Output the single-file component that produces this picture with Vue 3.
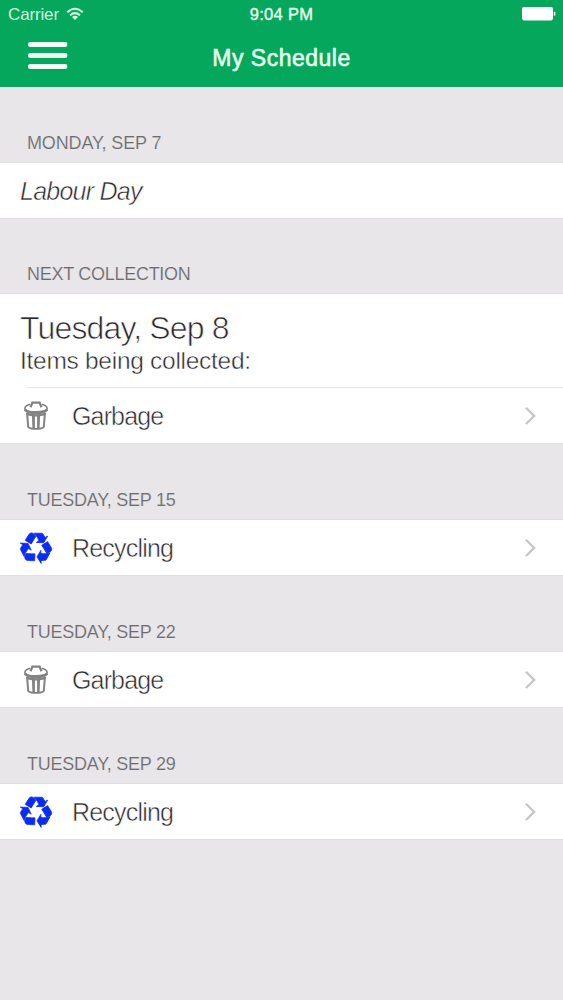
<script setup>
const groups = [
  { title: 'MONDAY, SEP 7', holiday: 'Labour Day' },
  { title: 'NEXT COLLECTION', day: 'Tuesday, Sep 8', kind: 'garbage', label: 'Garbage' },
  { title: 'TUESDAY, SEP 15', kind: 'recycling', label: 'Recycling' },
  { title: 'TUESDAY, SEP 22', kind: 'garbage', label: 'Garbage' },
  { title: 'TUESDAY, SEP 29', kind: 'recycling', label: 'Recycling' },
]
</script>

<template>
  <div class="screen">
    <header>
      <div class="status">
        <div class="carrier">
          <span>Carrier</span>
          <svg width="18" height="14" viewBox="0 0 18 14" fill="none" stroke="#d9ffe6" stroke-width="2">
            <path d="M1.2 5.2Q9-1.8 16.800 5.200M4 8.300Q9 3.900 14 8.300" />
            <path d="M9 13L6 10Q9 7.600 12 10Z" fill="#d9ffe6" stroke="none" />
          </svg>
        </div>
        <span class="time">9:04 PM</span>
        <svg class="battery" width="34" height="14" viewBox="0 0 34 14" fill="#fff">
          <rect x="0" y="0" width="31" height="13.4" rx="1.8" />
          <path d="M31.800 4.800h.6q1 0 1 1v2q0 1-1 1h-.6z" />
        </svg>
      </div>
      <div class="nav">
        <svg width="40" height="28" viewBox="0 0 40 28" fill="#effff4">
          <rect x="0" y="0" width="39.4" height="5" rx="2.3" />
          <rect x="0" y="11" width="39.4" height="5" rx="2.3" />
          <rect x="0" y="22" width="39.4" height="5" rx="2.3" />
        </svg>
        <h1>My Schedule</h1>
      </div>
    </header>

    <section v-for="g in groups" :key="g.title">
      <h2 :class="{ next: g.day, monday: g.holiday }">{{ g.title }}</h2>
      <div class="card">
        <div v-if="g.holiday" class="holiday">{{ g.holiday }}</div>
        <div v-if="g.day" class="summary">
          <div class="day">{{ g.day }}</div>
          <div class="items">Items being collected:</div>
        </div>
        <div v-if="g.label" class="row">
          <svg v-if="g.kind === 'garbage'" class="icon" viewBox="0 0 32 32" fill="none" stroke="#828282">
            <path d="M10 4.200Q4.900 5.500 4.900 8.700C4.900 13 27.100 13 27.100 8.700Q27.100 5.500 22 4.200" stroke-width="1.700" />
            <path d="M4.800 9.500Q7.500 13 16 13T27.200 9.500" stroke-width="2.800" />
            <path d="M10.500 7.200L12.400 2.600H19.600L21.500 7.200" stroke-width="2.300" />
            <path d="M6 12.500Q16 16 26 12.500L24.700 27.500Q22.500 29.800 16 29.800T7.300 27.500Z" fill="#828282" stroke="none" />
            <path d="M8.300 15.500L12 16.200L12.400 27.800L9.200 27.100ZM14.900 16.500H17.100V28H14.900ZM20 16.200L23.700 15.500L22.800 27.100L19.600 27.800Z" fill="#fff" stroke="none" />
          </svg>
          <svg v-else class="icon recycle" viewBox="0 0 1792 1792" fill="#0a2cf0" stroke="#0a2cf0" stroke-width="45">
            <path d="M836 1169l-15 368-2 22-420-29q-36-3-67-31.500t-47-65.500q-11-27-14.500-55t4-65 12-55 21.500-64 19-53q78 12 509 28zm-387-586l180 379-147-92q-63 72-111.500 144.500t-72.500 125-39.500 94.500-18.500 63l-4 21-190-357q-17-26-18-56t6-47l8-18q35-63 114-188l-140-86zm1231 517l-188 359q-12 29-36.500 46.500t-43.500 20.500l-18 4q-71 7-219 12l8 164-230-367 211-362 7 173q170 16 283 5t170-33zm-785-924q-47 63-265 435l-317-187-19-12 225-356q20-31 60-45t80-10q24 2 48.500 12t42 21 41.500 33 36 34.500 36 39.500 32 35zm655 307l212 363q18 37 12.500 76t-27.500 74q-13 20-33 37t-38 28-48.500 22-47 16-51.500 14-46 12q-34-72-265-436l313-195zm-143-226l142-83-220 373-419-20 151-86q-34-89-75-166t-75.500-123.500-64.500-80-47-46.500l-17-13 405 1q31-3 58 10.500t39 28.500l11 15q39 61 112 190z" />
          </svg>
          <span class="label" :class="g.kind">{{ g.label }}</span>
          <svg class="chevron" width="12" height="20" viewBox="0 0 12 20" fill="none" stroke="#c5c5c7" stroke-width="2.2">
            <path d="M2 1.800L10.200 9.900L2 18" />
          </svg>
        </div>
      </div>
    </section>
  </div>
</template>

<style>
body { margin: 0; background: #e8e6e9; }
</style>

<style scoped>
.screen {
  width: 563px;
  height: 1000px;
  overflow: hidden;
  background: #e8e6e9;
  font-family: "Liberation Sans", Arial, sans-serif;
  color: #2c2a2d;
}
header {
  height: 87px;
  box-sizing: border-box;
  background: #04a75b;
  color: #e6ffef;
  box-shadow: 0 1px #f0f3f2;
}
.status {
  height: 28px;
  display: grid;
  grid-template-columns: 1fr auto 1fr;
  align-items: center;
  padding: 0 8px;
  font-size: 17px;
}
.carrier { display: flex; align-items: center; gap: 7px; letter-spacing: -0.15px; color: #d2f9df; padding-top: 1px; }
.carrier svg { margin-top: -2px; }
.time { font-size: 16.5px; letter-spacing: 0.3px; -webkit-text-stroke: 0.4px #e6ffef; padding-top: 1px; }
.battery { justify-self: end; margin-right: -1px; }
.nav {
  display: grid;
  grid-template-columns: 1fr auto 1fr;
  align-items: center;
  height: 59px;
  padding: 0 28px;
}
.nav svg { margin-top: -4px; }
h1 { margin: 0; font-size: 23px; line-height: 28px; font-weight: normal; letter-spacing: 0.5px; -webkit-text-stroke: 0.6px #e6ffef; }
h2 {
  box-sizing: border-box;
  height: 77px;
  margin: 0;
  padding: 46px 27px 0;
  font-size: 18px;
  line-height: 22px;
  font-weight: normal;
  color: #6c6b6e;
  letter-spacing: -0.24px;
  -webkit-text-stroke: 0.15px #e8e6e9;
}
h2.monday { height: 76px; padding-top: 45px; letter-spacing: -0.13px; }
h2.next { height: 76px; padding-top: 45px; letter-spacing: -0.28px; }
.card { background: #fff; box-shadow: 0 0 0 1px #e0dee1; }
.holiday {
  height: 55px;
  line-height: 56px;
  padding-left: 20px;
  font-size: 25px;
  font-style: italic;
  letter-spacing: -0.75px;
  -webkit-text-stroke: 0.5px #fff;
}
.summary { height: 93px; padding: 0 20px; }
.day { font-size: 32px; line-height: 36px; padding-top: 16px; letter-spacing: -0.85px; -webkit-text-stroke: 0.7px #fff; }
.items { font-size: 24.5px; line-height: 30px; letter-spacing: -0.28px; -webkit-text-stroke: 0.45px #fff; }
.row {
  box-sizing: border-box;
  height: 55px;
  display: flex;
  align-items: center;
  padding: 0 27px 0 20px;
}
.summary + .row { position: relative; height: 56px; padding-top: 1px; }
.summary + .row::before {
  content: "";
  position: absolute;
  inset: 0 0 auto 27px;
  height: 1px;
  background: #e7e5e8;
}
.icon { width: 32px; height: 32px; overflow: visible; }
.recycle { margin-top: 2px; }
.label { flex: 1; margin-left: 20px; padding-top: 2px; font-size: 25px; -webkit-text-stroke: 0.5px #fff; }
.label.garbage { letter-spacing: -0.85px; }
.label.recycling { letter-spacing: -0.8px; }
</style>
